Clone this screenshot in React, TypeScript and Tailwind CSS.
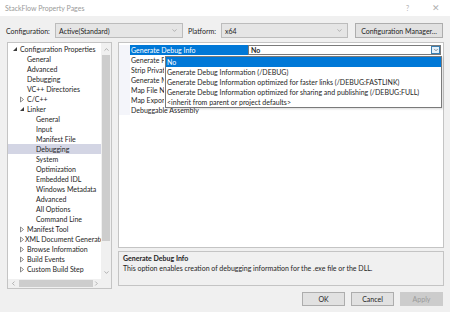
import { ChevronDown, ChevronUp, ChevronLeft, ChevronRight } from 'lucide-react';

const FONT = 'font-["Segoe_UI","Lato","Noto_Sans",sans-serif]';

type TreeItem = { label: string; level: number; node?: 'open' | 'closed'; selected?: boolean };

const tree: TreeItem[] = [
  { label: 'Configuration Properties', level: 0, node: 'open' },
  { label: 'General', level: 1 },
  { label: 'Advanced', level: 1 },
  { label: 'Debugging', level: 1 },
  { label: 'VC++ Directories', level: 1 },
  { label: 'C/C++', level: 1, node: 'closed' },
  { label: 'Linker', level: 1, node: 'open' },
  { label: 'General', level: 2 },
  { label: 'Input', level: 2 },
  { label: 'Manifest File', level: 2 },
  { label: 'Debugging', level: 2, selected: true },
  { label: 'System', level: 2 },
  { label: 'Optimization', level: 2 },
  { label: 'Embedded IDL', level: 2 },
  { label: 'Windows Metadata', level: 2 },
  { label: 'Advanced', level: 2 },
  { label: 'All Options', level: 2 },
  { label: 'Command Line', level: 2 },
  { label: 'Manifest Tool', level: 1, node: 'closed' },
  { label: 'XML Document Generator', level: 1, node: 'closed' },
  { label: 'Browse Information', level: 1, node: 'closed' },
  { label: 'Build Events', level: 1, node: 'closed' },
  { label: 'Custom Build Step', level: 1, node: 'closed' },
];

const props = [
  'Generate Debug Info',
  'Generate Program Database File',
  'Strip Private Symbols',
  'Generate Map File',
  'Map File Name',
  'Map Exports',
  'Debuggable Assembly',
];

const options = [
  'No',
  'Generate Debug Information (/DEBUG)',
  'Generate Debug Information optimized for faster links (/DEBUG:FASTLINK)',
  'Generate Debug Information optimized for sharing and publishing (/DEBUG:FULL)',
  '<inherit from parent or project defaults>',
];

const Arrow = ({ node }: { node?: 'open' | 'closed' }) => {
  if (!node) return null;
  if (node === 'open')
    return (
      <svg width="6" height="6" viewBox="0 0 6 6" className="shrink-0">
        <polygon points="5,1 5,5 1,5" fill="#3c3c3c" />
      </svg>
    );
  return (
    <svg width="6" height="7" viewBox="0 0 6 7" className="shrink-0">
      <polygon points="1.5,1 4.5,3.5 1.5,6" fill="none" stroke="#6e6e6e" strokeWidth="0.8" />
    </svg>
  );
};

const Combo = ({ text, width }: { text: string; width: string }) => (
  <div className={`${width} h-[15px] flex items-center justify-between border border-[#bcbcbc] bg-[#e5e5e5] pl-[3px] pr-[4px]`}>
    <span>{text}</span>
    <ChevronDown size={7} strokeWidth={1.5} color="#707070" />
  </div>
);

export default function App() {
  return (
    <div className={`w-[450px] h-[312px] bg-[#f0f0f0] flex flex-col text-[7px] leading-[10px] text-[#1e1e1e] ${FONT} overflow-hidden`}>
      {/* title bar */}
      <div className="h-[16px] bg-white flex items-center pl-[5px] pr-[10px] text-[#9a9a9a]">
        <span className="flex-1">StackFlow Property Pages</span>
        <span className="w-[26px] text-[#b0b0b0]">?</span>
        <span className="text-[9px] text-[#b0b0b0]">✕</span>
      </div>

      {/* configuration row */}
      <div className="flex items-center mt-[7px] pl-[6px] h-[15px]">
        <span className="w-[49px]">Configuration:</span>
        <Combo text="Active(Standard)" width="w-[128px]" />
        <span className="ml-[5px] w-[33px]">Platform:</span>
        <Combo text="x64" width="w-[127px]" />
        <div className="ml-[7px] w-[88px] h-[15px] border border-[#adadad] bg-[#e1e1e1] flex items-center justify-center">
          Configuration Manager...
        </div>
      </div>

      {/* main */}
      <div className="flex mt-[4px] pl-[7px] pr-[6px] gap-[6px] h-[247px]">
        {/* tree */}
        <div className="w-[105px] border border-[#c4c4c4] bg-white flex flex-col">
          <div className="flex flex-1 min-h-0">
            <div className="flex-1 pt-[1px] overflow-hidden whitespace-nowrap">
              {tree.map((t, i) => (
                <div
                  key={i}
                  className={`h-[10px] flex items-center ${t.selected ? 'bg-[#d3d5e4]' : ''}`}
                  style={{ paddingLeft: t.level === 0 ? 4 : t.level === 1 ? (t.node ? 11 : 19) : 28 }}
                >
                  {t.node && <span className="w-[8px] flex items-center"><Arrow node={t.node} /></span>}
                  <span>{t.label}</span>
                </div>
              ))}
            </div>
            <div className="w-[10px] bg-[#f0f0f0] flex flex-col items-center">
              <ChevronUp size={7} strokeWidth={1.5} color="#606060" className="mt-[3px]" />
              <div className="mt-[2px] w-[8px] h-[186px] bg-[#cdcdcd]" />
              <div className="flex-1" />
              <ChevronDown size={7} strokeWidth={1.5} color="#606060" className="mb-[3px]" />
            </div>
          </div>
          <div className="h-[9px] bg-[#f0f0f0] flex items-center px-[2px]">
            <ChevronLeft size={7} strokeWidth={1.5} color="#606060" />
            <div className="ml-[2px] w-[76px] h-[7px] bg-[#cdcdcd]" />
            <div className="flex-1" />
            <ChevronRight size={7} strokeWidth={1.5} color="#606060" />
            <div className="w-[10px]" />
          </div>
        </div>

        {/* right side */}
        <div className="flex-1 flex flex-col gap-[3px]">
          <div className="relative h-[206px] border border-[#c4c4c4] bg-white pt-[2px]">
            {props.map((p, i) => {
              const covered = i >= 1 && i <= 5;
              return (
                <div key={i} className="h-[10px] flex">
                  <div className="w-[11px] bg-[#f4f5fa]" />
                  <div
                    className={`${covered ? 'w-[34px]' : 'w-[118px]'} pl-[1px] whitespace-nowrap overflow-hidden ${i === 0 ? 'bg-[#0078d7] text-white' : ''}`}
                  >
                    {p}
                  </div>
                  {i === 0 && (
                    <div className="flex-1 mr-[2px] flex items-center justify-between border border-[#7a7a7a] bg-white pl-[2px] font-bold">
                      <span>No</span>
                      <div className="w-[9px] h-[8px] bg-[#e5f1fb] border border-[#3c7fb1] flex items-center justify-center">
                        <ChevronDown size={6} strokeWidth={2} color="#2d2d2d" />
                      </div>
                    </div>
                  )}
                </div>
              );
            })}
            {/* dropdown list */}
            <div className="absolute left-[46px] top-[13px] w-[277px] border border-[#7a7a7a] bg-white shadow-[1px_1px_2px_rgba(0,0,0,0.15)]">
              {options.map((o, i) => (
                <div key={i} className={`h-[10px] pl-[1px] whitespace-nowrap ${i === 0 ? 'bg-[#0078d7] text-white' : ''}`}>{o}</div>
              ))}
            </div>
          </div>

          <div className="h-[35px] border border-[#c4c4c4] bg-[#f0f0f0] pl-[4px] pt-[1px]">
            <div className="font-bold">Generate Debug Info</div>
            <div>This option enables creation of debugging information for the .exe file or the DLL.</div>
          </div>
        </div>
      </div>

      {/* buttons */}
      <div className="flex justify-end gap-[6px] pr-[7px] mt-[3px]">
        <div className="w-[43px] h-[14px] border border-[#adadad] bg-[#e1e1e1] flex items-center justify-center">OK</div>
        <div className="w-[43px] h-[14px] border border-[#adadad] bg-[#e1e1e1] flex items-center justify-center">Cancel</div>
        <div className="w-[43px] h-[14px] border border-[#cccccc] bg-[#cccccc] text-[#9a9a9a] flex items-center justify-center">Apply</div>
      </div>
    </div>
  );
}
